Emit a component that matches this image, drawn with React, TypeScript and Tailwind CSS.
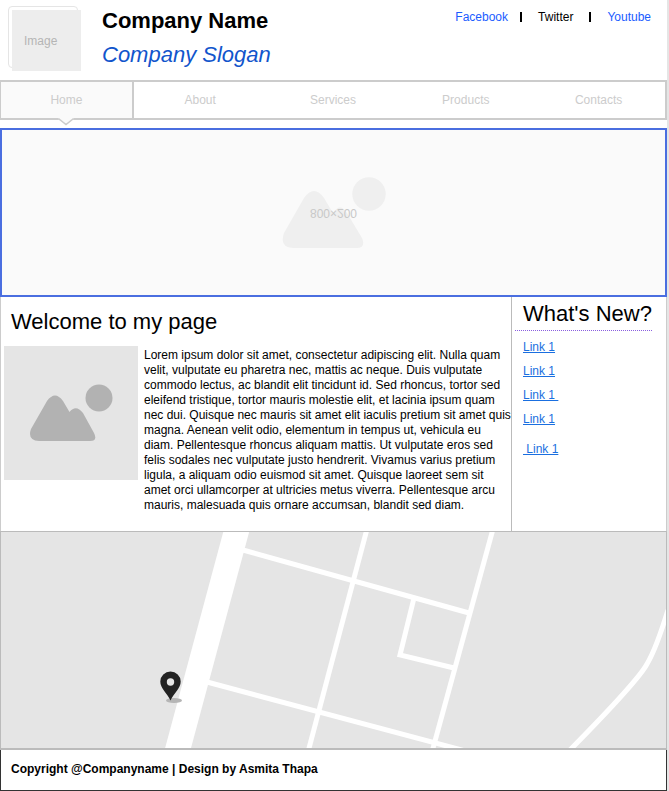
const navItems = ['Home', 'About', 'Services', 'Products', 'Contacts'];

const introLines = [
  'Lorem ipsum dolor sit amet, consectetur adipiscing elit. Nulla quam',
  'velit, vulputate eu pharetra nec, mattis ac neque. Duis vulputate',
  'commodo lectus, ac blandit elit tincidunt id. Sed rhoncus, tortor sed',
  'eleifend tristique, tortor mauris molestie elit, et lacinia ipsum quam',
  'nec dui. Quisque nec mauris sit amet elit iaculis pretium sit amet quis',
  'magna. Aenean velit odio, elementum in tempus ut, vehicula eu',
  'diam. Pellentesque rhoncus aliquam mattis. Ut vulputate eros sed',
  'felis sodales nec vulputate justo hendrerit. Vivamus varius pretium',
  'ligula, a aliquam odio euismod sit amet. Quisque laoreet sem sit',
  'amet orci ullamcorper at ultricies metus viverra. Pellentesque arcu',
  'mauris, malesuada quis ornare accumsan, blandit sed diam.',
];

function Mountains({ className }: { className: string }) {
  return (
    <svg viewBox="0 0 83 58" className={className} fill="currentColor" aria-hidden="true">
      <path d="M1 45 L17 17 Q25 6 33 17 L39.500 28 Q46 20 53 29 L64 49 Q68 57 60 57 H9 Q-3 56 1 45Z" />
      <circle cx="69" cy="14" r="13.5" />
    </svg>
  );
}

function HeroPicture() {
  return (
    <svg viewBox="0 0 104 72" className="h-[72px] w-[104px]" fill="#efefef" aria-hidden="true">
      <path d="M2 56 L22 21 Q32 7 42 21 L51 36 Q58 25 65 36 L80 61 Q84 71 75 71 H11 Q-3 70 2 56Z" />
      <circle cx="87" cy="17" r="16.7" />
    </svg>
  );
}

function StreetMap() {
  return (
    <svg
      viewBox="0 0 665 216"
      preserveAspectRatio="xMidYMid slice"
      className="block h-[216px] w-full bg-[#e5e5e5]"
      role="img"
      aria-label="Map"
    >
      <g fill="none" stroke="#fff" strokeWidth="5">
        <path d="M236 -3 L176 220" strokeWidth="25" />
        <path d="M242 18 L468 81" />
        <path d="M206 150 L472 221" />
        <path d="M366 -3 L307 220" />
        <path d="M492 -3 L431 220" />
        <path d="M413 66 L399 123 L453 136" />
        <path d="M567 220 Q637 149 646 132 Q655 117 667 78" />
      </g>
      <ellipse cx="173" cy="168.500" rx="8" ry="2.500" fill="#b5b5b5" />
      <path
        d="M169.500 168.500 C166 161 159.300 156 159.300 149.500 A10.200 10 0 0 1 179.700 149.500 C179.700 156 173 161 169.500 168.500Z"
        fill="#222"
      />
      <circle cx="169.500" cy="150" r="3.700" fill="#e5e5e5" />
    </svg>
  );
}

export default function App() {
  return (
    <div className="bg-[#e5e5e5] pr-[2px] font-['Liberation_Sans',Arial,sans-serif] text-xs text-black">
      <div className="bg-white">
        <header className="flex h-20 items-start justify-between pl-2 pr-4">
          <div className="flex">
            <div className="mt-[6px] h-[62px] w-[70px] rounded border border-[#e5e5e5] pl-[3px] pt-[3px]">
              <div className="flex h-[61px] w-[69px] items-center bg-[#ededed] pl-3 text-[#b5b5b5]">Image</div>
            </div>
            <div className="ml-6 mt-2 text-[22px]">
              <h1 className="h-[34px] leading-[26px] font-bold">Company Name</h1>
              <p className="leading-[26px] text-[#1155cc] italic">Company Slogan</p>
            </div>
          </div>
          <nav aria-label="Social" className="mt-[9px] flex items-center leading-4">
            <a href="#facebook" className="text-[#1a5cff]">Facebook</a>
            <span className="mr-4 ml-3 h-[10px] w-[2px] bg-black" />
            <a href="#twitter">Twitter</a>
            <span className="mx-4 h-[10px] w-[2px] bg-black" />
            <a href="#youtube" className="text-[#1a5cff]">Youtube</a>
          </nav>
        </header>

        <nav aria-label="Main" className="grid h-10 grid-cols-5 border-y-2 border-r-2 border-l border-[#ccc]">
          {navItems.map((item, i) => (
            <a
              key={item}
              href={'#' + item.toLowerCase()}
              className={
                i === 0
                  ? 'relative flex items-center justify-center border-r-2 border-[#ccc] bg-[#fafafa] text-[#ccc]'
                  : 'flex items-center justify-center text-[#ccc]'
              }
            >
              {item}
              {i === 0 && (
                <svg viewBox="0 0 18 9" className="absolute top-full left-1/2 h-[9px] w-[18px] -translate-x-1/2" aria-hidden="true">
                  <path d="M1 0 H17 V1 L9 7 L1 1Z" fill="#fafafa" />
                  <path d="M0 1 H2 L9 6.500 L16 1 H18" fill="none" stroke="#ccc" strokeWidth="1.500" />
                </svg>
              )}
            </a>
          ))}
        </nav>

        <section className="mt-2 flex h-[169px] items-center justify-center border-2 border-[#4a6ee0] bg-[#fafafa]">
          <div className="relative">
            <HeroPicture />
            <span className="absolute inset-0 flex -scale-y-100 items-center justify-center text-[#c8c8c8]">800×200</span>
          </div>
        </section>

        <main className="flex h-[234px] border-x border-[#ccc]">
          <section className="min-w-0 flex-1">
            <h2 className="pt-3 pl-[10px] text-[22px] leading-[26px]">Welcome to my page</h2>
            <div className="mt-[11px] flex pl-[3px]">
              <div className="flex h-[134px] w-[134px] shrink-0 items-center justify-center bg-[#e5e5e5] text-[#b2b2b2]">
                <Mountains className="h-[58px] w-[83px]" />
              </div>
              <p className="ml-[6px] pt-[2px] leading-[15px] whitespace-nowrap">
                {introLines.map((line) => (
                  <span key={line} className="block">{line}</span>
                ))}
              </p>
            </div>
          </section>
          <aside className="w-[155px] shrink-0 border-l border-[#bbb] pl-[3px]">
            <h2 className="mr-[14px] border-b border-dotted border-[#8a5fe0] pt-1 pb-[3px] pl-2 text-[22px] leading-[26px] whitespace-nowrap">
              What&apos;s New?
            </h2>
            <ul className="pt-2 pl-2 leading-4 text-[#1a6fe0]">
              <li className="mb-2"><a href="#link-1" className="underline">Link 1</a></li>
              <li className="mb-2"><a href="#link-2" className="underline">Link 1</a></li>
              <li className="mb-2"><a href="#link-3" className="underline">Link 1&nbsp;</a></li>
              <li className="mb-[14px]"><a href="#link-4" className="underline">Link 1</a></li>
              <li><a href="#link-5" className="underline">&nbsp;Link 1</a></li>
            </ul>
          </aside>
        </main>

        <section className="border border-b-2 border-[#bbb]">
          <StreetMap />
        </section>
        <footer className="h-[41px] border-x border-b border-[#333] pt-[11px] pl-[10px] leading-4 font-bold">
          Copyright @Companyname | Design by Asmita Thapa
        </footer>
      </div>
    </div>
  );
}
